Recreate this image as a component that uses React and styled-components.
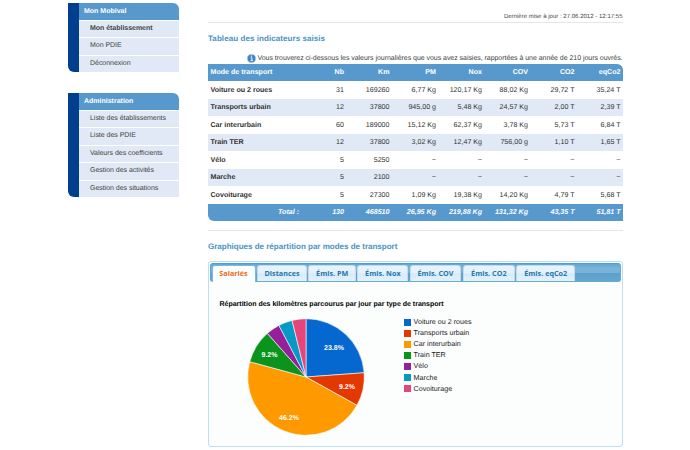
import React from "react";
import styled, { createGlobalStyle } from "styled-components";

const GlobalStyle = createGlobalStyle`
  * {
    box-sizing: border-box;
  }

  body {
    margin: 0;
    background: #fff;
    color: #444;
    font-family: "Liberation Sans", Arial, sans-serif;
    font-size: 7px;
    text-rendering: geometricPrecision;
  }
`;

const Page = styled.div`
  display: flex;
  align-items: flex-start;
  width: 690px;
  height: 450px;
  padding-left: 68px;
  overflow: hidden;
`;

const Sidebar = styled.aside`
  display: flex;
  flex-direction: column;
  gap: 21px;
  width: 111px;
  padding-top: 3px;
`;

const Menu = styled.nav`
  border-left: 11px solid #003f8e;
  border-radius: 0 6px 0 6px;
  overflow: hidden;
`;

const MenuTitle = styled.div`
  height: 16.5px;
  padding-left: 5px;
  background: #5899cd;
  color: #fff;
  font-weight: bold;
  line-height: 17.5px;
`;

const MenuItem = styled.div`
  height: 17.5px;
  padding-left: 11px;
  border-top: 1px solid #fff;
  background: #e0e9f5;
  font-weight: ${({ $active }) => ($active ? "bold" : "normal")};
  line-height: 16.5px;
  letter-spacing: -0.03px;
  white-space: nowrap;
`;

const Main = styled.main`
  width: 414.5px;
  margin-left: 29px;
`;

const Updated = styled.div`
  height: 23px;
  padding-top: 13px;
  border-bottom: 1px solid #e6e6e6;
  font-size: 6px;
  line-height: 9px;
  letter-spacing: 0.02px;
  text-align: right;
`;

const Heading = styled.h2`
  height: 12px;
  margin: 9px 0 0;
  color: #4a90cb;
  font-size: 8px;
  line-height: 13.5px;
  letter-spacing: ${({ $spacing }) => $spacing}px;
  white-space: nowrap;
`;

const Notice = styled.p`
  display: flex;
  align-items: center;
  justify-content: flex-end;
  gap: 2px;
  height: 10px;
  margin: 9px 0 0.5px;
  letter-spacing: -0.04px;
  white-space: nowrap;
`;

const Table = styled.table`
  width: 100%;
  table-layout: fixed;
  border-spacing: 0;
  border-radius: 0 6px 0 6px;
  overflow: hidden;
`;

const Row = styled.tr`
  height: 17.5px;
  background: ${({ $kind }) =>
    ({ head: "#5899cd", total: "#5899cd", even: "#e0e9f5", odd: "#fff" })[$kind]};
  color: ${({ $kind }) => ($kind === "head" || $kind === "total" ? "#fff" : "#333")};
  font-size: 7.1px;
  font-weight: ${({ $kind }) => ($kind === "head" || $kind === "total" ? "bold" : "normal")};
  font-style: ${({ $kind }) => ($kind === "total" ? "italic" : "normal")};
`;

const Cell = styled.td`
  padding: 0 2px 0 0;
  line-height: 10px;
  text-align: right;
  white-space: nowrap;
`;

const Label = styled.th`
  padding: 0 ${({ $total }) => ($total ? 1 : 0)}px 0 2.5px;
  line-height: 10px;
  text-align: ${({ $total }) => ($total ? "right" : "left")};
  white-space: nowrap;
`;

const Rule = styled.hr`
  height: 1px;
  margin: 9px 0 0;
  border: 0;
  background: #e6e6e6;
`;

const Panel = styled.section`
  height: 186px;
  margin-top: 9px;
  padding: 1px;
  border: 1px solid #bedff1;
  border-radius: 3px;
  background: #fcfdfd;
`;

const TabBar = styled.div`
  display: flex;
  align-items: flex-end;
  gap: 1.4px;
  height: 19px;
  padding: 0 0.5px;
  border: 1px solid #4297d7;
  border-color: #4b9fd5 #67aad3 #67aad3 #5ba5d6;
  border-radius: 3px;
  background: linear-gradient(#5fa7d5 0%, #7ab4da 25%, #78b3d9 50%, #5da1ce 56%, #62a6d2 100%);
`;

const Tab = styled.button`
  width: ${({ $width }) => $width}px;
  height: ${({ $active }) => ($active ? 17 : 16)}px;
  margin-bottom: ${({ $active }) => ($active ? -1 : 0)}px;
  padding: 0 0 ${({ $active }) => ($active ? 2 : 1)}px;
  flex: none;
  border: 1px solid ${({ $active }) => ($active ? "#79b7e7" : "#c5dbec")};
  border-bottom: 0;
  border-radius: 3px 3px 0 0;
  background: ${({ $active }) =>
    $active ? "#fcfdfd" : "linear-gradient(#e8f4fc 0%, #e4f1fb 48%, #d5eaf8 52%, #e2f2fd 100%)"};
  color: ${({ $active }) => ($active ? "#f0690f" : "#2676a8")};
  font: bold 7.2px "Open Sans", "Noto Sans", sans-serif;
  letter-spacing: 0.03px;
  white-space: nowrap;
`;

const ChartTitle = styled.h3`
  height: 10px;
  margin: 17px 0 0 9.5px;
  color: #000;
  font-size: 7px;
  line-height: 11.5px;
`;

const Chart = styled.div`
  display: flex;
  align-items: flex-start;
  padding: 7.5px 0 0 36.3px;
`;

const Pie = styled.svg`
  flex: none;
  width: 120px;
  height: 120px;

  text {
    fill: #fff;
    font-size: 7px;
    font-weight: bold;
    text-anchor: middle;
  }
`;

const Legend = styled.ul`
  margin: 0 0 0 37.5px;
  padding: 0;
  list-style: none;
`;

const LegendItem = styled.li`
  display: flex;
  align-items: center;
  gap: 2.8px;
  height: 11.1px;
  color: #222;
  font-size: 7.15px;
  white-space: nowrap;

  &::before {
    content: "";
    width: 7px;
    height: 7px;
    background: ${({ $color }) => $color};
  }
`;

const menus = [
  { title: "Mon Mobival", items: ["Mon établissement", "Mon PDIE", "Déconnexion"], active: 0 },
  {
    title: "Administration",
    items: [
      "Liste des établissements",
      "Liste des PDIE",
      "Valeurs des coefficients",
      "Gestion des activités",
      "Gestion des situations",
    ],
  },
];

const columns = ["Nb", "Km", "PM", "Nox", "COV", "CO2", "eqCo2"];
const columnWidths = [92, 46, 45.5, 46.5, 46, 46, 46.5, 46];

const rows = [
  ["Voiture ou 2 roues", "31", "169260", "6,77 Kg", "120,17 Kg", "88,02 Kg", "29,72 T", "35,24 T"],
  ["Transports urbain", "12", "37800", "945,00 g", "5,48 Kg", "24,57 Kg", "2,00 T", "2,39 T"],
  ["Car interurbain", "60", "189000", "15,12 Kg", "62,37 Kg", "3,78 Kg", "5,73 T", "6,84 T"],
  ["Train TER", "12", "37800", "3,02 Kg", "12,47 Kg", "756,00 g", "1,10 T", "1,65 T"],
  ["Vélo", "5", "5250", "~", "~", "~", "~", "~"],
  ["Marche", "5", "2100", "~", "~", "~", "~", "~"],
  ["Covoiturage", "5", "27300", "1,09 Kg", "19,38 Kg", "14,20 Kg", "4,79 T", "5,68 T"],
];

const totals = ["130", "468510", "26,95 Kg", "219,88 Kg", "131,32 Kg", "43,35 T", "51,81 T"];

const tabs = [
  ["Salariés", 44],
  ["Distances", 50.2],
  ["Émis. PM", 47.6],
  ["Émis. Nox", 50.8],
  ["Émis. COV", 51.8],
  ["Émis. CO2", 52],
  ["Émis. eqCo2", 59],
];

const slices = [
  { name: "Voiture ou 2 roues", value: 31, color: "#0568d0", label: "23.8%", x: 88, y: 32.5 },
  { name: "Transports urbain", value: 12, color: "#e33900", label: "9.2%", x: 101, y: 71.5 },
  { name: "Car interurbain", value: 60, color: "#ff9900", label: "46.2%", x: 43, y: 103 },
  { name: "Train TER", value: 12, color: "#0b941c", label: "9.2%", x: 23.5, y: 40 },
  { name: "Vélo", value: 5, color: "#96209a" },
  { name: "Marche", value: 5, color: "#0599c6" },
  { name: "Covoiturage", value: 5, color: "#e3467a" },
];

const C = 60;
const R = 58.3;

const slicePath = (index) => {
  const total = slices.reduce((sum, s) => sum + s.value, 0);
  const before = slices.slice(0, index).reduce((sum, s) => sum + s.value, 0);
  const a = (before / total) * 2 * Math.PI;
  const b = ((before + slices[index].value) / total) * 2 * Math.PI;
  const point = (t) => `${C + R * Math.sin(t)} ${C - R * Math.cos(t)}`;
  return `M${C} ${C}L${point(a)}A${R} ${R} 0 0 1 ${point(b)}Z`;
};

const InfoIcon = () => (
  <svg width="9" height="9" viewBox="0 0 9 9">
    <circle cx="4.5" cy="4.5" r="4.1" fill="#3f86c6" stroke="#a5c6e3" strokeWidth="0.6" />
    <path d="M3.6 3.8h1.3v2.7M3.5 6.6h2.3" stroke="#fff" strokeWidth="0.9" fill="none" />
    <circle cx="4.5" cy="2.2" r="0.65" fill="#fff" />
  </svg>
);

const App = () => {
  return (
    <Page>
      <GlobalStyle />
      <Sidebar>
        {menus.map((menu) => (
          <Menu key={menu.title}>
            <MenuTitle>{menu.title}</MenuTitle>
            {menu.items.map((item, i) => (
              <MenuItem key={item} $active={menu.active === i}>{item}</MenuItem>
            ))}
          </Menu>
        ))}
      </Sidebar>

      <Main>
        <Updated>Dernière mise à jour : 27.06.2012 - 12:17:55</Updated>

        {/* Indicators table */}
        <Heading $spacing={0.07}>Tableau des indicateurs saisis</Heading>
        <Notice>
          <InfoIcon />
          <span>
            Vous trouverez ci-dessous les valeurs journalières que vous avez saisies, rapportées à une année de 210 jours ouvrés.
          </span>
        </Notice>
        <Table>
          <colgroup>
            {columnWidths.map((width, i) => <col key={i} width={width} />)}
          </colgroup>
          <thead>
            <Row $kind="head">
              <Label>Mode de transport</Label>
              {columns.map((name) => <Cell key={name}>{name}</Cell>)}
            </Row>
          </thead>
          <tbody>
            {rows.map(([name, ...values], i) => (
              <Row key={name} $kind={i % 2 ? "even" : "odd"}>
                <Label>{name}</Label>
                {values.map((value, j) => <Cell key={j}>{value}</Cell>)}
              </Row>
            ))}
          </tbody>
          <tfoot>
            <Row $kind="total">
              <Label $total>Total :</Label>
              {totals.map((value, j) => <Cell key={j}>{value}</Cell>)}
            </Row>
          </tfoot>
        </Table>

        {/* Charts */}
        <Rule />
        <Heading $spacing={0}>Graphiques de répartition par modes de transport</Heading>
        <Panel>
          <TabBar>
            {tabs.map(([name, width], i) => (
              <Tab key={name} $width={width} $active={i === 0}>{name}</Tab>
            ))}
          </TabBar>
          <ChartTitle>Répartition des kilomètres parcourus par jour par type de transport</ChartTitle>
          <Chart>
            <Pie viewBox="0 0 120 120">
              {slices.map((slice, i) => (
                <path key={slice.name} d={slicePath(i)} fill={slice.color} stroke="#fff" strokeWidth="0.6" />
              ))}
              {slices.filter((slice) => slice.label).map((slice) => (
                <text key={slice.name} x={slice.x} y={slice.y}>{slice.label}</text>
              ))}
            </Pie>
            <Legend>
              {slices.map((slice) => (
                <LegendItem key={slice.name} $color={slice.color}>{slice.name}</LegendItem>
              ))}
            </Legend>
          </Chart>
        </Panel>
      </Main>
    </Page>
  );
};

export default App;
